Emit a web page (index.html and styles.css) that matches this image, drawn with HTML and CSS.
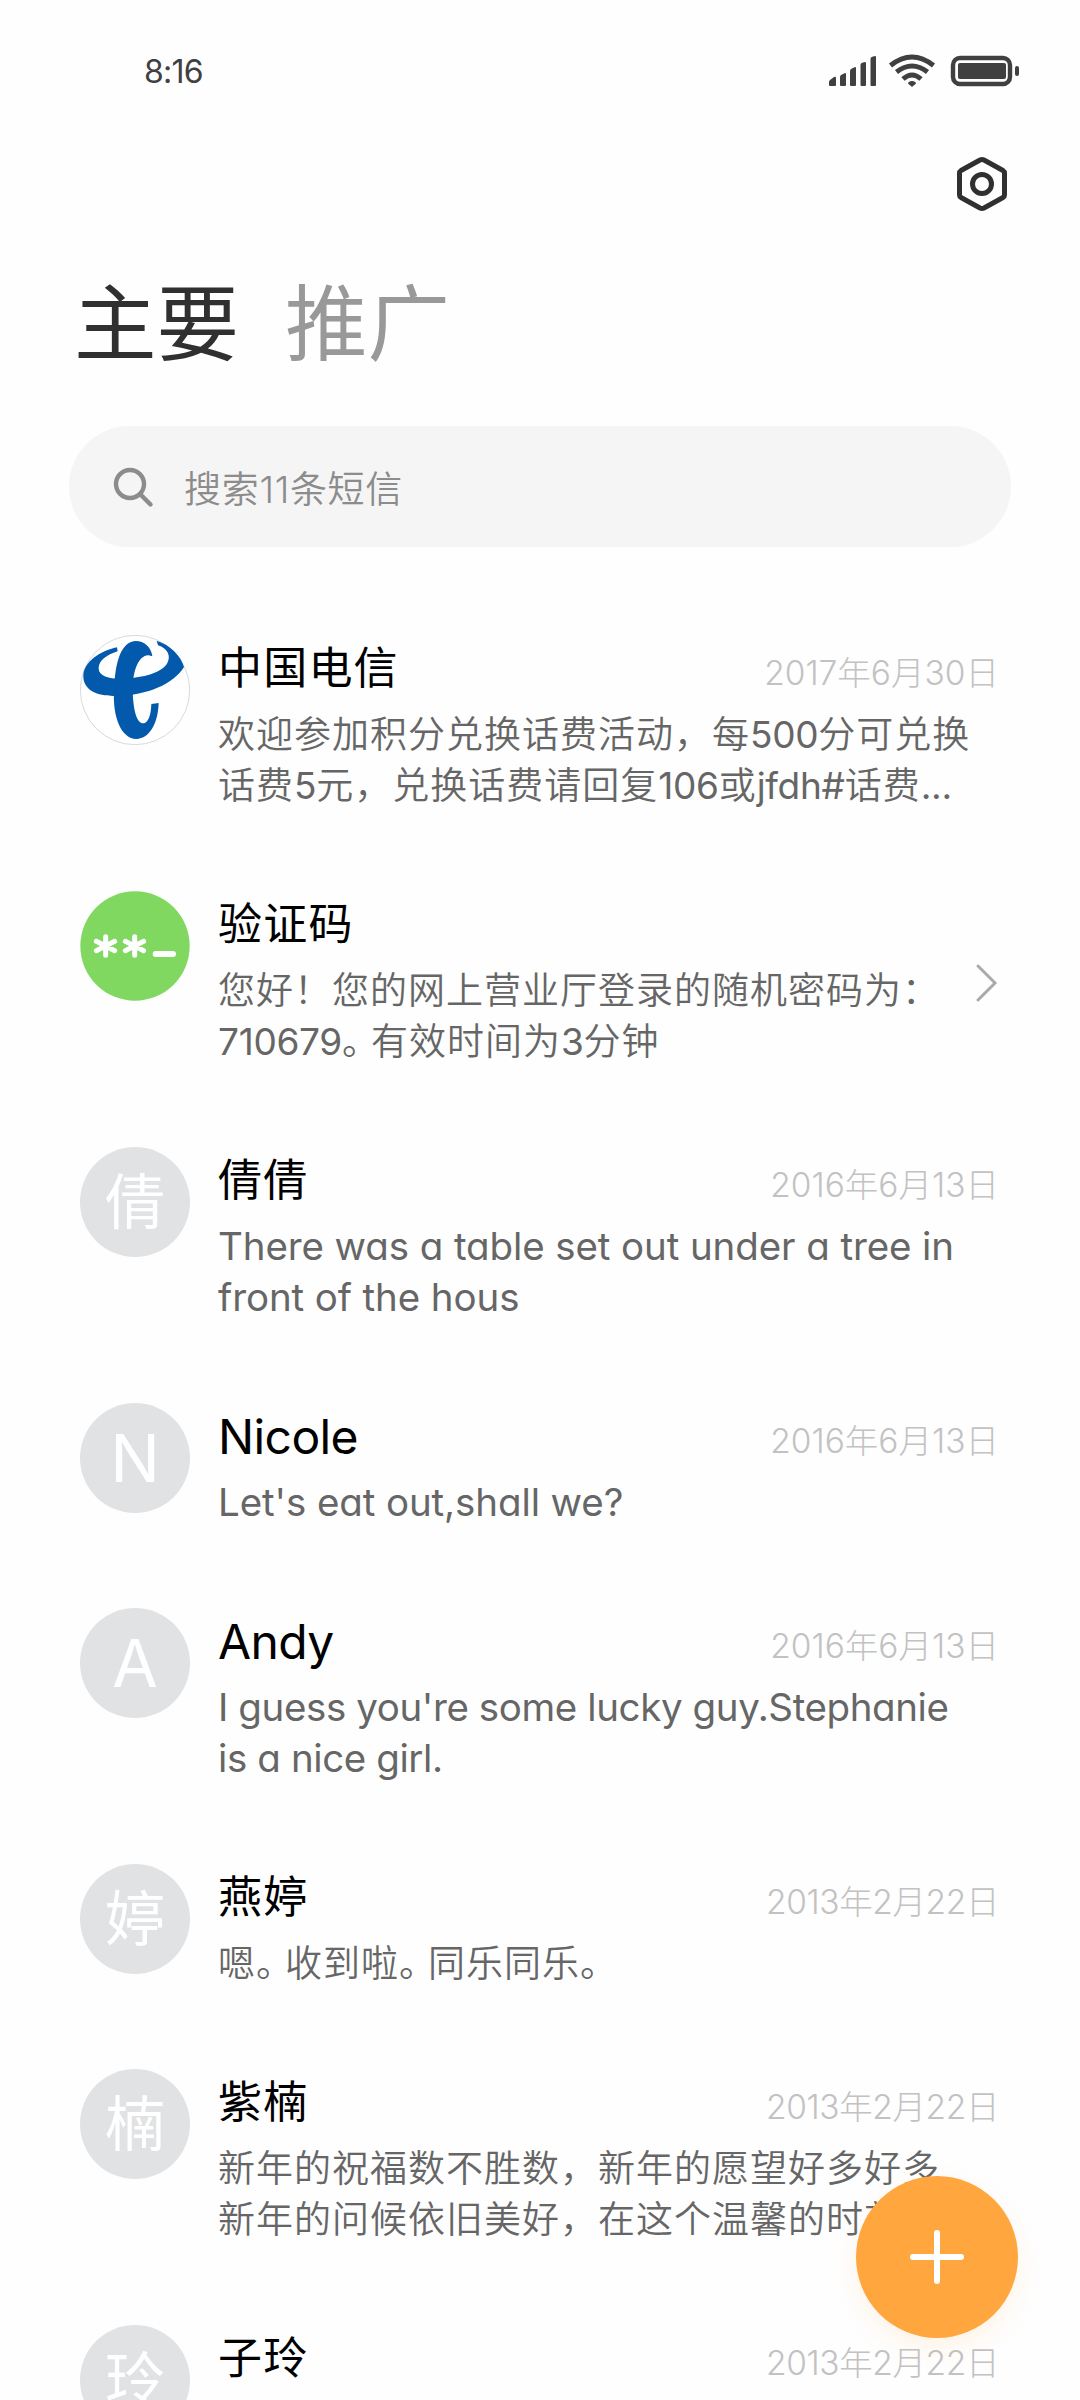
FILE: index.html
```html
<!DOCTYPE html>
<html lang="zh-CN">
<head>
<meta charset="utf-8">
<title>短信</title>
<link rel="stylesheet" href="styles.css">
</head>
<body>
<div class="screen">
  <header class="status">
    <span class="clock">8:16</span>
    <svg class="status-icons" width="194" height="36" viewBox="0 0 194 36" fill="#404040">
      <path d="M1 32v-3q0-1 1-2l4-3q2-1 2 1v7q0 1-1 1H2q-1 0-1-1zM12 32v-8q0-1 1-2l4-2q1 0 1 1v11q0 1-1 1h-4q-1 0-1-1zM22 32V18q0-1 1-2l4-2q1 0 1 1v17q0 1-1 1h-4q-1 0-1-1zM32.500 32V12q0-1 1-2l3.500-1q1 0 1 1v22q0 1-1 1h-3.500q-1 0-1-1zM42.500 32V6q0-1 1-2l3.500-1q1 0 1 1v28q0 1-1 1h-3.500q-1 0-1-1z"/>
      <g fill="none" stroke="#404040" stroke-width="5">
        <path d="M62.500 12.500Q84 -4.500 105.500 12.500"/>
        <path d="M68.500 19Q84 7 99.500 19"/>
        <path d="M75 26Q84 18 93 26"/>
        <rect x="125" y="5" width="57" height="26" rx="7" stroke-width="4.400"/>
      </g>
      <path d="M80 30.500q0-2 4-2.500 4 .5 4 2.500l-4 3.500z"/>
      <rect x="130" y="10" width="48" height="16" rx="2"/>
      <rect x="187" y="13" width="4" height="10" rx="2"/>
    </svg>
  </header>
  <div class="toolbar">
    <svg width="52" height="56" viewBox="0 0 52 56" fill="none" stroke="#303030" stroke-width="5" stroke-linejoin="round">
      <path d="M26 3.500Q27 3.500 28 4L47 14.500Q48.500 15.500 48.500 17V39Q48.500 40.500 47 41.500L28 52Q26 53 24 52L5 41.500Q3.500 40.500 3.500 39V17Q3.500 15.500 5 14.500L24 4Q25 3.500 26 3.500Z"/>
      <circle cx="26" cy="28" r="9.500"/>
    </svg>
  </div>
  <nav class="tabs"><span class="tab active">主要</span><span class="tab">推广</span></nav>
  <div class="search">
    <svg width="42" height="42" viewBox="0 0 42 42" fill="none" stroke="#8c8c8c" stroke-width="4.400" stroke-linecap="round"><circle cx="18" cy="18" r="14"/><path d="M28 28l10.500 10.500"/></svg>
    <span>搜索11条短信</span>
  </div>
  <main class="list">
    <article class="row">
      <svg class="avatar" viewBox="0 0 330 330">
        <circle cx="165" cy="165" r="164" fill="#fff" stroke="#c4c6ca" stroke-width="2"/>
        <g fill="#0359ab">
          <path d="M111 37C60 47 10 82 10 124C10 168 56 184 105 183C200 182 280 148 312 96C303 62 270 30 230 17L234 31C262 40 274 62 262 84C247 112 198 125 148 130C98 134 57 127 56 101C55 78 80 59 113 49Z"/>
          <path d="M217 62C212 35 192 18 168 18C126 20 105 72 102 170C98 246 124 311 169 312C210 310 234 264 236 204L214 207C213 244 203 264 190 265C170 264 160 226 158 170C157 106 177 62 204 61C209 61 213 65 217 62Z"/>
        </g>
      </svg>
      <div class="content"><div class="head"><h2>中国电信</h2><time>2017年6月30日</time></div>
      <p>欢迎参加积分兑换话费活动，每<span class="num">500</span>分可兑换<br>话费<span class="num">5</span>元，兑换话费请回复<span class="num">106</span>或<span class="num">jfdh#</span>话费<span class="num">...</span></p></div>
    </article>
    <article class="row">
      <svg class="avatar" viewBox="0 0 330 330">
        <circle cx="165" cy="165" r="164" fill="#80d860"/>
        <g stroke="#fff" stroke-width="15" stroke-linecap="round"><path d="M77 137v56M49 151l55 28M104 151l-55 28M164 137v56M136 151l55 28M191 151l-55 28"/><path d="M227 189h52" stroke-width="18"/></g>
      </svg>
      <div class="content"><div class="head"><h2>验证码</h2></div>
      <p>您好！您的网上营业厅登录的随机密码为：<br><span class="num">710679</span><span class="stop">。</span>有效时间为<span class="num">3</span>分钟</p>
      <svg class="chevron" width="24" height="40" viewBox="0 0 24 40" fill="none" stroke="#aaa" stroke-width="3" stroke-linecap="round"><path d="M3 3l17 17L3 37"/></svg></div>
    </article>
    <article class="row">
      <div class="avatar letter">倩</div>
      <div class="content"><div class="head"><h2>倩倩</h2><time>2016年6月13日</time></div>
      <p class="latin">There was a table set out under a tree in<br>front of the hous</p></div>
    </article>
    <article class="row">
      <div class="avatar letter roman">N</div>
      <div class="content"><div class="head"><h2 class="roman-name">Nicole</h2><time>2016年6月13日</time></div>
      <p class="latin">Let's eat out,shall we?</p></div>
    </article>
    <article class="row">
      <div class="avatar letter roman">A</div>
      <div class="content"><div class="head"><h2 class="roman-name">Andy</h2><time>2016年6月13日</time></div>
      <p class="latin tight">I guess you're some lucky guy.Stephanie<br>is a nice girl.</p></div>
    </article>
    <article class="row">
      <div class="avatar letter">婷</div>
      <div class="content"><div class="head"><h2>燕婷</h2><time class="narrow">2013年2月22日</time></div>
      <p>嗯<span class="stop">。</span>收到啦<span class="stop">。</span>同乐同乐<span class="stop">。</span></p></div>
    </article>
    <article class="row">
      <div class="avatar letter">楠</div>
      <div class="content"><div class="head"><h2>紫楠</h2><time class="narrow">2013年2月22日</time></div>
      <p>新年的祝福数不胜数，新年的愿望好多好多<br>新年的问候依旧美好，在这个温馨的时刻</p></div>
    </article>
    <article class="row">
      <div class="avatar letter">玲</div>
      <div class="content"><div class="head"><h2>子玲</h2><time class="narrow">2013年2月22日</time></div></div>
    </article>
  </main>
  <div class="fab"><svg width="56" height="56" viewBox="0 0 56 56" stroke="#fff" stroke-width="6" stroke-linecap="round"><path d="M28 4v48M4 28h48"/></svg></div>
</div>
</body>
</html>
```
FILE: styles.css
```css
* { box-sizing: border-box; }
body { margin: 0; background: #fefefe; font-family: Inter, "Noto Sans CJK SC", sans-serif; font-weight: 350; font-feature-settings: "cv11"; }
svg { display: block; flex: none; }
.screen { position: relative; width: 1080px; height: 2400px; overflow: hidden; }
.status { height: 142px; padding: 0 58px 0 144px; display: flex; justify-content: space-between; align-items: center; }
.clock { font-size: 32px; font-weight: 400; color: #404040; letter-spacing: -0.8px; }
.toolbar { height: 84px; padding: 14px 72px 0; display: flex; justify-content: flex-end; }
.tabs { height: 200px; padding: 38px 0 0 74px; display: flex; gap: 46px; font-size: 82.5px; line-height: 120px; }
.tab { color: #999; font-weight: 400; }
.active { color: #303030; }
.search { width: 942px; height: 121px; margin-left: 69px; padding-left: 43px; display: flex; align-items: center; gap: 30px; border-radius: 61px; background: #f5f5f5; color: #8c8c8c; font-size: 37px; letter-spacing: 0.7px; }
.list { padding: 88px 81px 0 80px; display: flex; flex-direction: column; gap: 80.5px; }
.row { display: flex; gap: 28px; }
.avatar { width: 110px; height: 110px; flex: none; }
.letter { border-radius: 50%; background: #e0e2e4; color: #fff; display: flex; align-items: center; justify-content: center; font-size: 60px; line-height: 110px; font-weight: 400; }
.roman { font-size: 66px; }
.content { flex: 1; min-width: 0; position: relative; }
.head { height: 67px; display: flex; justify-content: space-between; }
h2 { margin: 0; font-size: 44px; line-height: 67px; font-weight: 400; letter-spacing: 1.2px; color: #000; }
.roman-name { font-size: 48px; letter-spacing: -0.6px; }
time { font-size: 33.5px; line-height: 76px; font-weight: 300; color: #c2c2c2; }
.narrow { letter-spacing: -0.4px; }
p { margin: 7px 0 -0.5px; font-size: 37px; line-height: 51px; letter-spacing: 1px; color: #666; white-space: nowrap; }
.num { font-weight: 400; letter-spacing: -0.3px; }
.latin { font-size: 38.5px; font-weight: 400; letter-spacing: -0.1px; }
.tight { letter-spacing: -0.4px; }
.stop { font-feature-settings: "halt"; letter-spacing: 10.5px; }
.chevron { position: absolute; right: 0; top: 72px; }
.fab { position: absolute; left: 856px; top: 2176px; width: 162px; height: 162px; border-radius: 50%; background: #ffa73e; display: flex; align-items: center; justify-content: center; box-shadow: 0 10px 24px rgba(255, 167, 62, .12); }
```
